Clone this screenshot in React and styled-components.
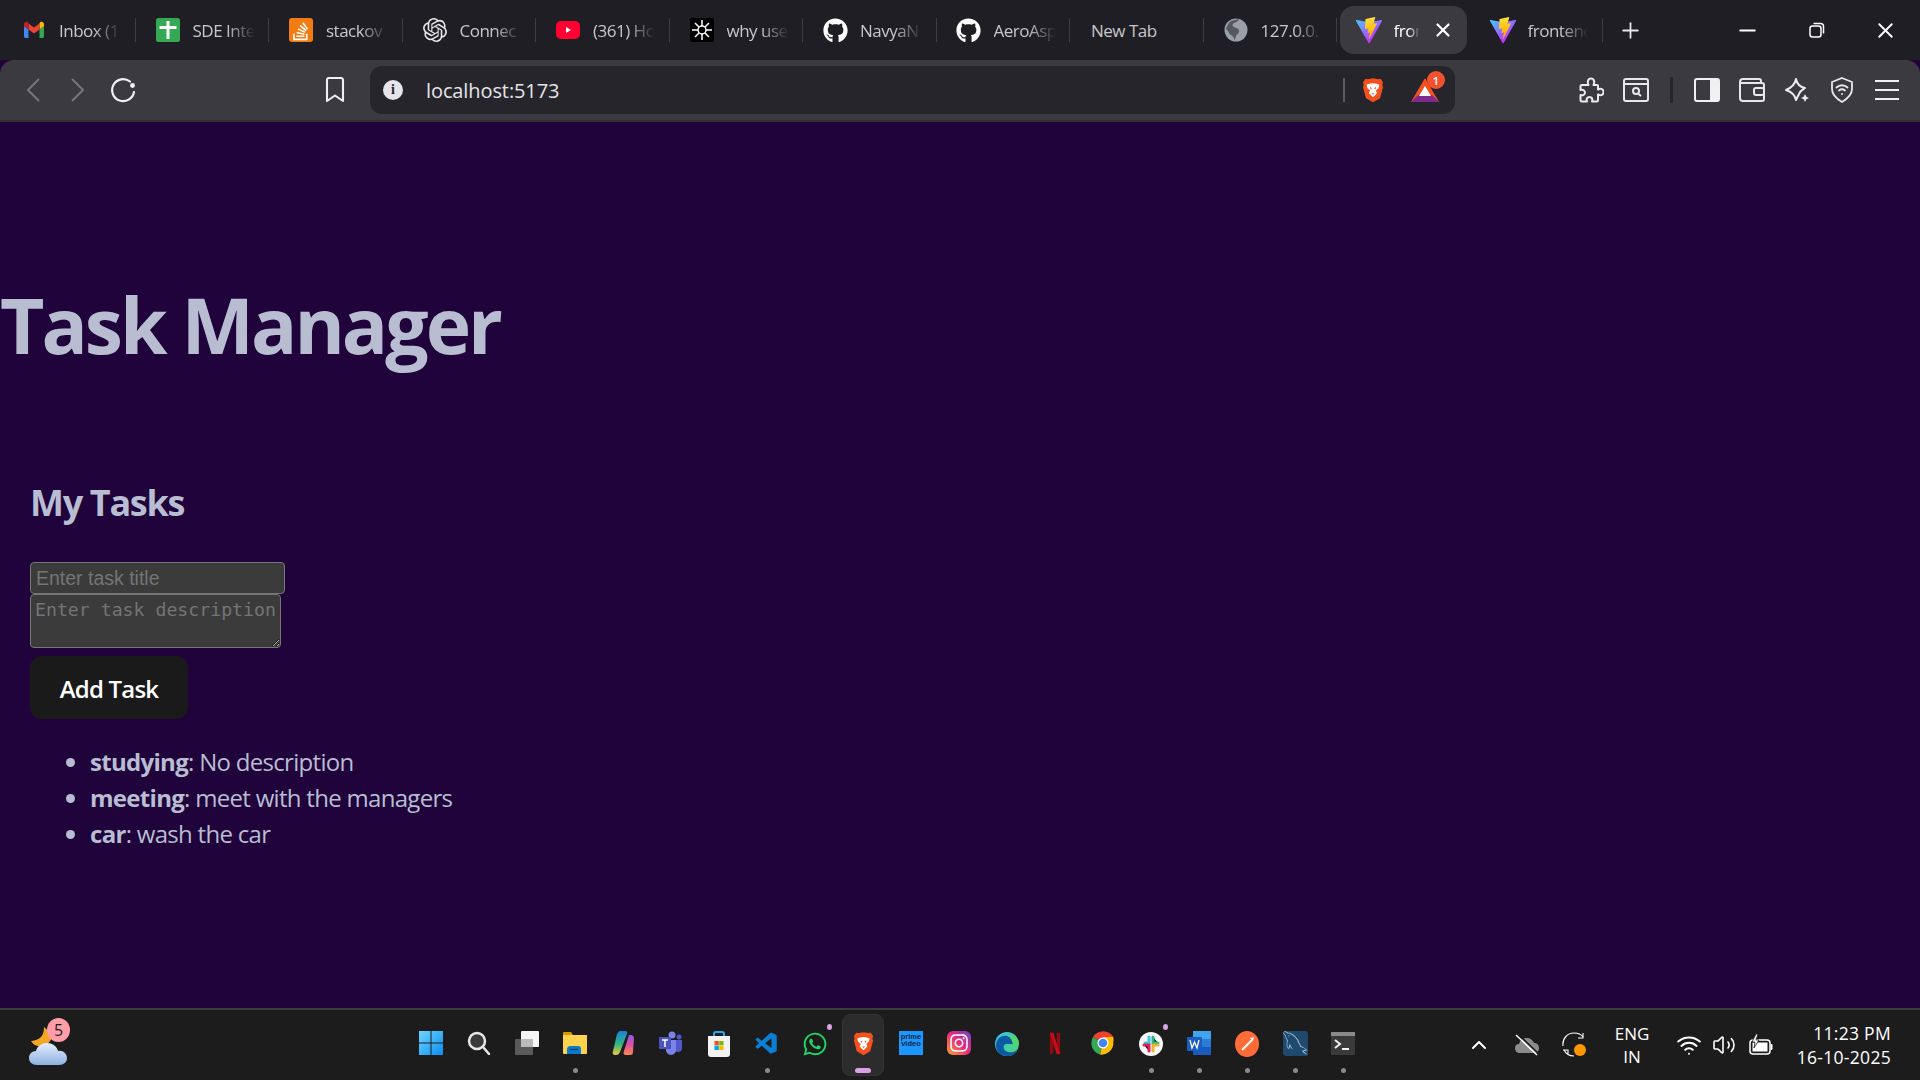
import React from "react";
import styled, { createGlobalStyle } from "styled-components";
import { FaGithub, FaWhatsapp, FaInstagram } from "react-icons/fa";
import { SiOpenai } from "react-icons/si";
import { VscVscode } from "react-icons/vsc";
import { GrMysql } from "react-icons/gr";
import { Wifi, Volume2, X, Plus, Minus, ChevronUp } from "lucide-react";

const Global = createGlobalStyle`
  html, body { margin: 0; padding: 0; height: 100%; background: #20033b; overflow: hidden; }
  #root { height: 100%; }
  * { box-sizing: border-box; }
`;

const UI = `"Open Sans", "Noto Sans", sans-serif`;

const Screen = styled.div`
  width: 1920px; height: 1080px; display: flex; flex-direction: column; font-family: ${UI};
`;

/* tab strip */
const TabStrip = styled.div`
  height: 60px; flex: none; background: #1e1e24; display: flex; align-items: center; padding-left: 2px; color: #fff;
`;
const Tab = styled.div`
  width: ${p => p.$w || 133.5}px; height: 48px; flex: none; display: flex; align-items: center; gap: 13px;
  padding-left: ${p => p.$pad || 20}px; position: relative; margin-left: ${p => p.$ml || 0}px;
  background: ${p => (p.$active ? "#3a3a40" : "transparent")};
  border-radius: 14px;
  &::after {
    content: ""; display: ${p => (p.$sep ? "block" : "none")}; position: absolute; right: 0; top: 12px; height: 24px; width: 1px; background: #3d3d43;
  }
`;
const TabIcon = styled.span`
  width: 24px; height: 24px; flex: none; display: flex; align-items: center; justify-content: center;
  svg { display: block; flex: none; }
`;
const TabTitle = styled.span`
  font-size: 17px; letter-spacing: -0.5px; white-space: nowrap; overflow: hidden; width: ${p => p.$w || 62}px; flex: none;
  color: ${p => (p.$bright ? "#fff" : "#c8c8ca")};
  -webkit-mask-image: ${p => (p.$plain ? "none" : "linear-gradient(to right, #000 55%, transparent 100%)")};
  mask-image: ${p => (p.$plain ? "none" : "linear-gradient(to right, #000 55%, transparent 100%)")};
`;
const TabClose = styled.span`
  position: absolute; left: 92px; top: 13px; width: 22px; height: 22px; display: flex; align-items: center; justify-content: center;
`;
const NewTabBtn = styled.div`
  width: 56px; display: flex; justify-content: center; align-items: center;
`;
const WindowControls = styled.div`
  margin-left: auto; display: flex; align-items: center;
`;
const WinBtn = styled.div`
  width: 69px; height: 48px; display: flex; align-items: center; justify-content: center;
`;

/* toolbar */
const Toolbar = styled.div`
  height: 62px; flex: none; background: #3a3a40; border-radius: 14px 14px 0 0; display: flex; align-items: center;
  padding: 0 0 0 10px; color: #f0f0f2; border-bottom: 2px solid #2e2e33;
`;
const ToolBtn = styled.div`
  width: ${p => p.$w || 45}px; height: 46px; flex: none; margin-left: ${p => p.$ml || 0}px; display: flex; align-items: center; justify-content: center;
  svg { display: block; }
`;
const ToolSep = styled.div`
  width: 3px; height: 26px; background: #25252b; border-radius: 2px;
`;
const UrlBar = styled.div`
  width: 1085px; height: 48px; flex: none; margin-left: 13px; background: #25252b; border-radius: 12px;
  display: flex; align-items: center; padding-left: 13px; position: relative;
`;
const UrlInfo = styled.span`
  width: 20px; height: 20px; border-radius: 50%; background: #e6e6ea; color: #25252b; font: 700 14px "Liberation Serif", serif;
  display: flex; align-items: center; justify-content: center;
`;
const UrlText = styled.span`
  margin-left: 23px; font-size: 20px; letter-spacing: -0.1px; color: #e4e6ea;
`;
const UrlEnd = styled.div`
  margin-left: auto; display: flex; align-items: center; height: 100%;
`;
const UrlSep = styled.div`
  width: 2px; height: 24px; background: #5a5a60;
`;
const UrlIconCell = styled.div`
  width: ${p => p.$w}px; display: flex; justify-content: center; align-items: center; position: relative;
`;
const Badge = styled.span`
  position: absolute; left: 26px; top: -7px; width: 18px; height: 18px; border-radius: 50%; background: #f4512e; color: #fff;
  font-size: 11px; font-weight: 600; display: flex; align-items: center; justify-content: center;
`;

/* page */
const Page = styled.main`
  flex: 1; min-height: 0; background: #20033b; color: #b8bdd1; padding-top: 161px;
`;
const Title = styled.h1`
  margin: 0; font-size: 76.8px; line-height: 84.5px; font-weight: 700; letter-spacing: -3px; white-space: nowrap;
`;
const Section = styled.section`
  padding: 0 30px; margin-top: 108px;
`;
const Subtitle = styled.h2`
  margin: 0 0 32px; font-size: 36px; line-height: 54px; font-weight: 700; letter-spacing: -1.3px;
`;
const Form = styled.form`
  display: flex; flex-direction: column; align-items: flex-start;
`;
const TitleInput = styled.input`
  width: 255px; height: 32px; background: #3b3b3b; border: 1.5px solid #767676; border-radius: 4px; padding: 1px 5px 0; margin: 0;
  font: 19.5px "Liberation Sans", Arial, sans-serif; color: #fff; outline: none;
  &::placeholder { color: #757575; opacity: 1; }
`;
const DescInput = styled.textarea`
  display: block; width: 251px; height: 54px; background: #3b3b3b; border: 1px solid #767676; border-radius: 4px; padding: 4px 4px 2px; margin: 0;
  font: 18.2px/21px "DejaVu Sans Mono", monospace; color: #fff; outline: none; letter-spacing: 0; color-scheme: dark;
  &::placeholder { color: #757575; opacity: 1; }
`;
const AddButton = styled.button`
  margin-top: 8px; width: 158px; height: 63px; background: #1a1a1a; border: 0; border-radius: 12px; color: #fff;
  font-family: ${UI}; font-size: 24px; font-weight: 600; letter-spacing: -0.8px; padding: 2px 0 0;
`;
const TaskList = styled.ul`
  margin: 25px 0 0; padding: 0 0 0 60px; font-size: 24px; line-height: 36px; letter-spacing: -0.7px;
  li::marker { color: #b8bdd1; }
`;
const Task = styled.li`
  strong { font-weight: 700; }
`;

/* taskbar */
const Taskbar = styled.footer`
  height: 72px; flex: none; background: #1c1c1c; border-top: 2px solid #3b3b3b; display: grid; grid-template-columns: 407px 961px 1fr; color: #fff;
`;
const Weather = styled.div`
  padding-left: 28px; display: flex; align-items: center;
`;
const WeatherIcon = styled.div`
  position: relative; width: 40px; height: 44px;
`;
const WeatherBadge = styled.span`
  position: absolute; left: 19px; top: -5px; width: 23px; height: 24px; border-radius: 50%; background: #ff9da8; color: #1c1c1c;
  font-size: 16px; display: flex; align-items: center; justify-content: center;
`;
const Apps = styled.div`
  display: flex; align-items: stretch;
`;
const AppCell = styled.div`
  width: 48px; position: relative; display: flex; justify-content: center; padding-top: 21px;
  svg { display: block; }
  &::before {
    content: ""; display: ${p => (p.$active ? "block" : "none")}; position: absolute; left: 3px; right: 3px; top: 4px; height: 60px; background: #2c2c2c; border: 1px solid #333; border-radius: 8px;
  }
  > * { position: relative; }
`;
const RunDot = styled.span`
  position: absolute !important; left: 21.5px; top: 58px; width: 5px; height: 5px; border-radius: 50%; background: #8a8a8a;
`;
const ActivePill = styled.span`
  position: absolute !important; left: 16px; top: 58px; width: 16px; height: 5px; border-radius: 3px; background: #d9a2e3;
`;
const NotifyDot = styled.span`
  position: absolute !important; left: 36px; top: 14px; width: 5px; height: 6px; border-radius: 50%; background: #d9a2e3;
`;
const Tray = styled.div`
  display: flex; align-items: center; padding-left: 87px;
`;
const TrayCell = styled.div`
  width: ${p => p.$w}px; display: flex; justify-content: center; align-items: center;
  svg { display: block; }
`;
const Lang = styled.div`
  width: 70px; font-size: 17px; line-height: 23px; text-align: center; font-family: "Open Sans", sans-serif; letter-spacing: -0.1px;
`;
const Clock = styled.div`
  margin-left: auto; padding-right: 29px; text-align: right; font-size: 17.5px; line-height: 24px; letter-spacing: 0.3px;
`;
const PrimeBox = styled.div`
  width: 24px; height: 24px; background: #1a98ff; color: #10233d; display: flex; flex-direction: column; align-items: center;
  font: 700 7.5px/7px "Liberation Sans", sans-serif; padding-top: 2px; text-align: center;
`;
const InstaBox = styled.div`
  width: 24px; height: 24px; border-radius: 6px; background: linear-gradient(45deg, #f9a825 0%, #ee2a7b 50%, #6a3fc9 100%);
  display: flex; align-items: center; justify-content: center; color: #fff;
`;

const Gmail = () => (
  <svg width="24" height="24" viewBox="0 0 24 24">
    <path d="M2 8v10.500C2 19.300 2.700 20 3.500 20h3v-8.500z" fill="#4285f4" />
    <path d="M22 8v10.500c0 .8-.7 1.500-1.500 1.500h-3v-8.500z" fill="#34a853" />
    <path d="M17.500 5.500v6L22 8V6.200c0-2-2.300-3.200-3.900-2z" fill="#fbbc04" />
    <path d="M6.500 11.500v-6L12 9.600l5.500-4.100v6L12 15.600z" fill="#ea4335" />
    <path d="M2 6.200V8l4.500 3.500v-6L5.900 4.200C4.300 3 2 4.200 2 6.200z" fill="#c5221f" />
  </svg>
);
const Sheets = () => (
  <svg width="24" height="24" viewBox="0 0 24 24">
    <rect width="24" height="24" rx="2.500" fill="#34a853" />
    <path d="M3.500 8h7V3h3v5h7v3h-7v10h-3V11h-7z" fill="#fff" />
  </svg>
);
const SO = () => (
  <svg width="24" height="24" viewBox="0 0 24 24">
    <rect width="24" height="24" rx="3" fill="#f47b0f" />
    <g transform="translate(4 3) scale(0.04)">
      <path fill="#fff" d="M290.700 311L95 269.700 86.800 309l195.700 41zm51-87L188.200 95.700l-25.500 30.800 153.500 128.300zm-31.200 39.700L129.200 179l-16.700 36.500L293.700 300zM262 32l-32 24 119.300 160.300 32-24zm20.500 328h-200v39.700h200zm39.700 80H42.700V320h-40v160h359.500V320h-40z" />
    </g>
  </svg>
);
const YouTube = () => (
  <svg width="24" height="24" viewBox="0 0 24 24">
    <rect y="3" width="24" height="18" rx="5" fill="#ff0033" />
    <path d="M10 9l5 3-5 3z" fill="#fff" />
  </svg>
);
const WhyIcon = () => (
  <svg width="24" height="24" viewBox="0 0 24 24">
    <rect width="24" height="24" rx="2" fill="#000" />
    <g stroke="#fff" strokeWidth="1.500" fill="none">
      <path d="M12 2v20M5 5l14 14M19 5L5 19M2 12h20" />
      <circle cx="12" cy="12" r="4" fill="#000" />
    </g>
  </svg>
);
const Globe = () => (
  <svg width="24" height="24" viewBox="0 0 24 24">
    <circle cx="12" cy="12" r="11.500" fill="#9aa0a6" />
    <path d="M15 1c-1 3-3 3-5 4S8 8 10 9s5 1 5 4-2 3-3 5-1 4-1 5c-1-3-2-5-4-6s-2-4-5-6c0 0 2-6 5-8" fill="#1e1e24" opacity=".55" />
  </svg>
);
const Vite = ({ id }) => (
  <svg width="28" height="27" viewBox="0 0 410 404">
    <defs>
      <linearGradient id={id + "a"} x1="6" y1="33" x2="235" y2="344" gradientUnits="userSpaceOnUse">
        <stop stopColor="#41D1FF" /><stop offset="1" stopColor="#BD34FE" />
      </linearGradient>
      <linearGradient id={id + "b"} x1="194" y1="8" x2="236" y2="292" gradientUnits="userSpaceOnUse">
        <stop stopColor="#FFEA83" /><stop offset="0.08" stopColor="#FFDD35" /><stop offset="1" stopColor="#FFA800" />
      </linearGradient>
    </defs>
    <path d="M399.641 59.5246L215.643 388.545C211.844 395.338 202.084 395.378 198.228 388.618L10.5817 59.5563C6.38087 52.1896 12.6802 43.2665 21.0281 44.7586L205.223 77.6824C206.398 77.8924 207.601 77.8904 208.776 77.6763L389.119 44.8058C397.439 43.2894 403.768 52.1434 399.641 59.5246Z" fill={`url(#${id}a)`} />
    <path d="M292.965 1.5744L156.801 28.2552C154.563 28.6937 152.906 30.5903 152.771 32.8664L144.395 174.33C144.198 177.662 147.258 180.248 150.51 179.498L188.42 170.749C191.967 169.931 195.172 173.055 194.443 176.622L183.18 231.775C182.422 235.487 185.907 238.661 189.532 237.56L212.947 230.446C216.577 229.344 220.065 232.527 219.297 236.242L201.398 322.875C200.278 328.294 207.486 331.249 210.492 326.603L212.5 323.5L323.454 102.072C325.312 98.3645 322.108 94.137 318.036 94.9228L279.014 102.454C275.347 103.161 272.227 99.746 273.262 96.1583L298.731 7.86689C299.767 4.27314 296.636 0.855181 292.965 1.5744Z" fill={`url(#${id}b)`} />
  </svg>
);
const Brave = ({ s = 24 }) => (
  <svg width={s} height={s * 1.1} viewBox="0 0 24 26">
    <path d="M12 1l5 1 2.500-.5L22 5l-.7 2.500.7 2.500-3 11-7 4-7-4-3-11 .7-2.500L2 5l2.500-3.500L7 2z" fill="#f4511e" />
    <path d="M12 6l3.500.5 3 1-1 3.500L15 13l1 3-2.500 2.500L12 20l-1.500-1.500L8 16l1-3-2.500-2-1-3.500 3-1z" fill="#fff" />
    <path d="M9 9.500l2 1.500-1.500 1zM15 9.500l-2 1.500 1.500 1zM10.500 16h3L12 17.500z" fill="#f4511e" />
  </svg>
);
const BatTriangle = () => (
  <svg width="28" height="24" viewBox="0 0 28 24">
    <path d="M14 0l14 24H0z" fill="#f4511e" />
    <path d="M0 24l7-7h14l7 7z" fill="#7d2a8c" />
    <path d="M14 8l6 10H8z" fill="#fff" />
  </svg>
);
const Chevron = ({ dir }) => (
  <svg width="14" height="24" viewBox="0 0 14 24" fill="none" stroke="#77777c" strokeWidth="1.800" strokeLinecap="round" strokeLinejoin="round">
    <path d={dir === "left" ? "M12.500 1.500L2 12l10.500 10.500" : "M1.500 1.500L12 12 1.500 22.500"} />
  </svg>
);
const Reload = () => (
  <svg width="26" height="26" viewBox="0 0 26 26" fill="none" stroke="#f2f2f4" strokeWidth="2.200" strokeLinecap="round">
    <path d="M24 15a11 11 0 1 1-4-10.500" />
    <circle cx="22.500" cy="8.500" r="2.400" fill="#f2f2f4" stroke="none" />
  </svg>
);
const BookmarkIcon = () => (
  <svg width="20" height="26" viewBox="0 0 20 26" fill="none" stroke="#f0f0f2" strokeWidth="2.100" strokeLinejoin="round">
    <path d="M2 3a2 2 0 0 1 2-2h12a2 2 0 0 1 2 2v21l-8-5.500L2 24z" />
  </svg>
);
const PuzzleIcon = () => (
  <svg width="26" height="26" viewBox="0 0 26 26" fill="none" stroke="#ececee" strokeWidth="2" strokeLinejoin="round">
    <path d="M7 8h3.500C9 5 10 1.500 13 1.500S17 5 15.500 8H19a1 1 0 0 1 1 1v3.500c3-1.500 5.500-.5 5.500 2.500S23 19 20 17.500V23a1.500 1.500 0 0 1-1.500 1.500H14c1-3-.5-4.500-2.500-4.500S8 21.500 9 24.500H4A1.500 1.500 0 0 1 2.500 23v-5c2.500 1 4.500-.5 4.500-2.500S4.500 12 2.500 13V9.500A1.500 1.500 0 0 1 4 8z" />
  </svg>
);
const Screenshot = () => (
  <svg width="26" height="24" viewBox="0 0 26 24" fill="none" stroke="#e8e8ea" strokeWidth="2">
    <rect x="1" y="1" width="24" height="22" rx="2" />
    <path d="M1 6h24" />
    <circle cx="13" cy="13" r="3" />
    <path d="M15 15.500l3 2.500" />
  </svg>
);
const Sidebar = () => (
  <svg width="26" height="24" viewBox="0 0 26 24">
    <rect x="1" y="1" width="24" height="22" rx="2" fill="none" stroke="#f0f0f2" strokeWidth="2" />
    <path d="M16 1h7a2 2 0 0 1 2 2v18a2 2 0 0 1-2 2h-7z" fill="#f0f0f2" />
  </svg>
);
const Wallet = () => (
  <svg width="26" height="24" viewBox="0 0 26 24" fill="none" stroke="#e8e8ea" strokeWidth="2">
    <path d="M22 5V3a2 2 0 0 0-2-2H4a3 3 0 0 0-3 3v16a3 3 0 0 0 3 3h19a2 2 0 0 0 2-2V7a2 2 0 0 0-2-2H1" />
    <rect x="15" y="10" width="10" height="7" rx="2" />
  </svg>
);
const Leo = () => (
  <svg width="26" height="26" viewBox="0 0 26 26" fill="none" stroke="#ececee" strokeWidth="2" strokeLinejoin="round">
    <path d="M12 2c1 5 4 8 9 9-3 2-5 3-6 6l-3 6c-1-5-4-8-10-10 5-2 9-6 10-11z" />
    <path d="M21 17l1.300 2.700L25 21l-2.700 1.300L21 25l-1.300-2.700L17 21l2.700-1.300z" fill="#ececee" stroke="none" />
  </svg>
);
const Vpn = () => (
  <svg width="24" height="26" viewBox="0 0 24 26" fill="none" stroke="#e8e8ea" strokeWidth="1.800" strokeLinecap="round">
    <path d="M12 1l10 4v7c0 6-5 10-10 13C7 22 2 18 2 12V5z" />
    <path d="M6.500 10.500c3-3 8-3 11 0M9 13.500c2-1.600 4-1.600 6 0" />
    <circle cx="12" cy="17" r="1" fill="#e8e8ea" stroke="none" />
  </svg>
);
const Menu = () => (
  <svg width="26" height="22" viewBox="0 0 26 22" stroke="#f0f0f2" strokeWidth="2">
    <path d="M1 2h24M1 11h24M1 20h24" />
  </svg>
);
const Restore = () => (
  <svg width="16" height="16" viewBox="0 0 16 16" fill="none" stroke="#fff" strokeWidth="1.500">
    <rect x="1" y="4" width="11" height="11" rx="2.500" />
    <path d="M4.500 1.500h7a3 3 0 0 1 3 3v7" />
  </svg>
);
const Start = () => (
  <svg width="24" height="24" viewBox="0 0 24 24">
    <defs><linearGradient id="st" x1="0" y1="0" x2="1" y2="1"><stop stopColor="#6fd4ff" /><stop offset="1" stopColor="#0a8ff0" /></linearGradient></defs>
    <path d="M0 0h11.500v11.500H0zM12.500 0H24v11.500H12.500zM0 12.500h11.500V24H0zM12.500 12.500H24V24H12.500z" fill="url(#st)" />
  </svg>
);
const Search = () => (
  <svg width="24" height="24" viewBox="0 0 24 24">
    <circle cx="10" cy="10" r="8" fill="#3a3a3a" stroke="#e8e8e8" strokeWidth="2.500" />
    <path d="M16 16l6 7" stroke="#e8e8e8" strokeWidth="2.500" strokeLinecap="round" />
  </svg>
);
const TaskView = () => (
  <svg width="24" height="24" viewBox="0 0 24 24">
    <rect x="6" y="0" width="18" height="16" rx="1" fill="#f7f7f7" />
    <rect x="0" y="8" width="18" height="16" rx="1" fill="#606060" opacity=".92" />
    <rect x="6" y="8" width="12" height="8" fill="#bbb" />
  </svg>
);
const Explorer = () => (
  <svg width="24" height="24" viewBox="0 0 24 24">
    <path d="M0 2a1 1 0 0 1 1-1h7l2 3h13a1 1 0 0 1 1 1v3H0z" fill="#d99a00" />
    <path d="M0 4h24v18a1 1 0 0 1-1 1H1a1 1 0 0 1-1-1z" fill="#fdd34d" />
    <path d="M4 23v-5.500A3 3 0 0 1 7 15h8a3 3 0 0 1 3 3v5z" fill="#0a7cd0" />
    <path d="M7 18.500h8" stroke="#05355e" strokeWidth="1.200" />
  </svg>
);
const Copilot = () => (
  <svg width="22" height="24" viewBox="0 0 22 24">
    <defs>
      <linearGradient id="c1" x1="0" y1="0" x2="0" y2="1"><stop stopColor="#1a7fd8" /><stop offset=".55" stopColor="#2fb67f" /><stop offset="1" stopColor="#f5c73d" /></linearGradient>
      <linearGradient id="c2" x1="0" y1="0" x2="0" y2="1"><stop stopColor="#8a5cf0" /><stop offset=".5" stopColor="#e0509e" /><stop offset="1" stopColor="#fb8a4c" /></linearGradient>
    </defs>
    <path d="M8 0h5c2 0 3 1 2 3L8 21c-1 2-2 3-4 3H3c-2 0-3-2-2-4L5 3c1-2 2-3 3-3z" fill="url(#c1)" />
    <path d="M14 24h4c2 0 3-1 3-3l1-14c0-2-2-3-3-3l-2 0-5 16c-1 3 0 4 2 4z" fill="url(#c2)" />
  </svg>
);
const Teams = () => (
  <svg width="24" height="24" viewBox="0 0 24 24">
    <circle cx="13" cy="4" r="3.500" fill="#7b83eb" />
    <circle cx="20" cy="6" r="2.500" fill="#5059c9" />
    <path d="M15 9h8v8a4 4 0 0 1-8 0z" fill="#5059c9" />
    <path d="M6 9h11v10a5 5 0 0 1-10 0z" fill="#7b83eb" />
    <rect x="0" y="6" width="12" height="12" rx="1" fill="#4b53bc" />
    <path d="M3 9h6M6 9v7" stroke="#fff" strokeWidth="1.500" />
  </svg>
);
const Store = () => (
  <svg width="24" height="26" viewBox="0 0 24 26">
    <path d="M7 6V3a2 2 0 0 1 2-2h6a2 2 0 0 1 2 2v3" fill="none" stroke="#28a8ea" strokeWidth="2" />
    <path d="M1 5h22v18a3 3 0 0 1-3 3H4a3 3 0 0 1-3-3z" fill="#f3f3f3" />
    <rect x="7.500" y="10" width="4.300" height="4.300" fill="#f25022" />
    <rect x="12.200" y="10" width="4.300" height="4.300" fill="#7fba00" />
    <rect x="7.500" y="14.700" width="4.300" height="4.300" fill="#00a4ef" />
    <rect x="12.200" y="14.700" width="4.300" height="4.300" fill="#ffb900" />
  </svg>
);
const Edge = () => (
  <svg width="24" height="26" viewBox="0 0 24 26">
    <defs>
      <linearGradient id="e1" x1="0" y1="0" x2="1" y2="1"><stop stopColor="#35c1f1" /><stop offset="1" stopColor="#52d86a" /></linearGradient>
    </defs>
    <circle cx="12" cy="13" r="12" fill="url(#e1)" />
    <path d="M1 15C1 6 8 4 12 5c5 1 7 5 6 8l-6 0c-3 0-4 2-3 5 1 2 4 4 9 3 3-1 4-2 5-3-2 6-7 7-11 7C5 25 1 20 1 15z" fill="#0c59a4" />
    <path d="M24 13c0 2-3 2-6 0-1-3-2-7-6-8 6-1 12 2 12 8z" fill="#52d86a" />
  </svg>
);
const Netflix = () => (
  <svg width="12" height="24" viewBox="0 0 14 24">
    <path d="M1 0h4v24l-4 1zM9 0h4v25l-4-1z" fill="#8f0a12" />
    <path d="M1 0h4l8 25h-4z" fill="#c50f18" />
  </svg>
);
const Chrome = () => (
  <svg width="24" height="24" viewBox="0 0 24 24">
    <path d="M12 12L2 6a12 12 0 0 1 20.400 0z" fill="#ea4335" />
    <path d="M12 12L2 6a12 12 0 0 0 7 17.600z" fill="#34a853" />
    <path d="M12 12h10.400a12 12 0 0 1-13.400 11.600z" fill="#fbbc04" />
    <path d="M12 6h10.400a12 12 0 0 1-5.200 12z" fill="#fbbc04" />
    <circle cx="12" cy="12" r="5.500" fill="#fff" />
    <circle cx="12" cy="12" r="4.300" fill="#4285f4" />
  </svg>
);
const Slack = () => (
  <svg width="24" height="26" viewBox="0 0 24 26">
    <circle cx="12" cy="13" r="12" fill="#f8f8f8" />
    <g strokeWidth="3" strokeLinecap="round">
      <path d="M10 6v6M10 12H6" stroke="#36c5f0" />
      <path d="M14 6v6h5" stroke="#2eb67d" />
      <path d="M14 20v-6M14 14h5" stroke="#ecb22e" />
      <path d="M10 20v-6H5" stroke="#e01e5a" />
    </g>
  </svg>
);
const Word = () => (
  <svg width="24" height="24" viewBox="0 0 24 24">
    <rect x="6" y="0" width="18" height="8" fill="#41a5ee" />
    <rect x="6" y="8" width="18" height="8" fill="#2b7cd3" />
    <rect x="6" y="16" width="18" height="8" fill="#185abd" />
    <rect x="0" y="6" width="15" height="14" rx="1" fill="#1a5dc0" />
    <path d="M3 9l2 8 2.500-6 2.500 6 2-8" stroke="#fff" strokeWidth="1.300" fill="none" />
  </svg>
);
const Postman = () => (
  <svg width="24" height="26" viewBox="0 0 24 26">
    <ellipse cx="12" cy="13" rx="12" ry="13" fill="#ff6c37" />
    <path d="M7 19L17 9" stroke="#fff" strokeWidth="2" />
    <path d="M15 7l3 3 1-4z" fill="#fff" />
  </svg>
);
const Terminal = () => (
  <svg width="24" height="24" viewBox="0 0 24 24">
    <rect y="1" width="24" height="23" rx="1.500" fill="#3a3a3a" />
    <rect y="1" width="24" height="4" fill="#8a8a8a" />
    <path d="M4 9l5 4-5 4" fill="none" stroke="#f0f0f0" strokeWidth="2" />
    <path d="M11 18h7" stroke="#f0f0f0" strokeWidth="2" />
  </svg>
);
const Cloud = () => (
  <svg width="40" height="44" viewBox="0 0 40 44">
    <defs><linearGradient id="wc" x1="0" y1="0" x2="0" y2="1"><stop stopColor="#e4eeff" /><stop offset="1" stopColor="#8eb1e0" /></linearGradient></defs>
    <path d="M16 4c0 8-3 13-13 14 3 5 8 6 15 5l8-10z" fill="#f5a623" />
    <path d="M9 42c-5 0-8-3-8-7s3-7 7-7c1-5 6-8 11-8s10 3 11 8c5-1 9 3 9 7s-3 7-8 7z" fill="url(#wc)" />
  </svg>
);
const OneDriveOff = () => (
  <svg width="26" height="22" viewBox="0 0 26 22">
    <path d="M6 19c-3 0-5-2-5-5 0-2 1-4 4-4 1-4 4-6 8-6 3 0 6 2 7 5 3 0 5 2 5 5s-2 5-5 5z" fill="#8c8c8c" />
    <path d="M2 1l21 20" stroke="#fff" strokeWidth="1.500" />
    <path d="M4 0l21 20" stroke="#1c1c1c" strokeWidth="1.500" />
  </svg>
);
const Sync = () => (
  <svg width="24" height="26" viewBox="0 0 24 26" fill="none">
    <path d="M1 14C0 6 6 1 12 1c4 0 7 1 9 4M21 1v5h-5" stroke="#fff" strokeWidth="1.100" />
    <path d="M1 18h5v4M2 18c2 4 5 6 10 6" stroke="#fff" strokeWidth="1.100" />
    <circle cx="18" cy="18" r="6" fill="#ff9800" />
  </svg>
);
const Battery = () => (
  <svg width="24" height="22" viewBox="0 0 24 22" fill="none">
    <rect x="1" y="6" width="20" height="14" rx="3" stroke="#fff" strokeWidth="1.500" />
    <rect x="3.500" y="8.500" width="15" height="9" fill="#fff" />
    <rect x="21.500" y="10" width="2" height="6" rx="1" fill="#fff" />
    <path d="M7 0L3 8h3l-1 6 5-8H7l2-6z" fill="#fff" stroke="#1c1c1c" strokeWidth=".8" />
  </svg>
);

const tabs = [
  { icon: <Gmail />, title: "Inbox (1" },
  { icon: <Sheets />, title: "SDE Inte" },
  { icon: <SO />, title: "stackov" },
  { icon: <SiOpenai size={24} color="#e8e8e8" />, title: "Connec" },
  { icon: <YouTube />, title: "(361) Ho" },
  { icon: <WhyIcon />, title: "why use" },
  { icon: <FaGithub size={25} color="#fff" />, title: "NavyaN" },
  { icon: <FaGithub size={25} color="#fff" />, title: "AeroAsp" },
  { title: "New Tab", plain: true },
  { icon: <Globe />, title: "127.0.0." },
];

const apps = [
  { el: <Start /> }, { el: <Search /> }, { el: <TaskView /> }, { el: <Explorer />, dot: true }, { el: <Copilot /> }, { el: <Teams /> },
  { el: <Store /> }, { el: <VscVscode size={26} color="#0a7fd4" />, dot: true }, { el: <FaWhatsapp size={26} color="#25d366" />, notify: true },
  { el: <Brave s={23} />, active: true },
  { el: <PrimeBox>prime<br />video</PrimeBox> },
  { el: <InstaBox><FaInstagram size={20} /></InstaBox> },
  { el: <Edge /> }, { el: <Netflix /> }, { el: <Chrome /> }, { el: <Slack />, dot: true, notify: true },
  { el: <Word />, dot: true }, { el: <Postman />, dot: true },
  { el: <GrMysql size={25} color="#9db8d2" style={{ background: "#1f4a6e", borderRadius: 3 }} />, dot: true },
  { el: <Terminal />, dot: true },
];

export default function App() {
  return (
    <Screen>
      <Global />
      <TabStrip>
        {tabs.map((t, i) => (
          <Tab key={i} $sep $pad={t.plain ? 21 : 20}>
            {t.icon && <TabIcon>{t.icon}</TabIcon>}
            <TabTitle $w={t.plain ? 90 : 62} $plain={t.plain}>{t.title}</TabTitle>
          </Tab>
        ))}
        <Tab $active $w={127} $ml={2.5} $pad={17}>
          <TabIcon><Vite id="v1" /></TabIcon>
          <TabTitle $w={26} $bright>front</TabTitle>
          <TabClose><X size={22} strokeWidth={2.4} color="#fff" /></TabClose>
        </Tab>
        <Tab $sep $w={132} $ml={4} $pad={20}>
          <TabIcon><Vite id="v2" /></TabIcon>
          <TabTitle $w={60}>frontend</TabTitle>
        </Tab>
        <NewTabBtn><Plus size={25} color="#e8e8ea" strokeWidth={1.7} /></NewTabBtn>
        <WindowControls>
          <WinBtn><Minus size={25} color="#fff" strokeWidth={1.8} /></WinBtn>
          <WinBtn><Restore /></WinBtn>
          <WinBtn><X size={25} color="#fff" strokeWidth={1.8} /></WinBtn>
        </WindowControls>
      </TabStrip>

      <Toolbar>
        <ToolBtn><Chevron dir="left" /></ToolBtn>
        <ToolBtn><Chevron dir="right" /></ToolBtn>
        <ToolBtn><Reload /></ToolBtn>
        <ToolBtn $ml={167}><BookmarkIcon /></ToolBtn>
        <UrlBar>
          <UrlInfo>i</UrlInfo>
          <UrlText>localhost:5173</UrlText>
          <UrlEnd>
            <UrlSep />
            <UrlIconCell $w={56}><Brave s={24} /></UrlIconCell>
            <UrlIconCell $w={48}><BatTriangle /><Badge>1</Badge></UrlIconCell>
            <UrlIconCell $w={6} />
          </UrlEnd>
        </UrlBar>
        <ToolBtn $ml={113}><PuzzleIcon /></ToolBtn>
        <ToolBtn><Screenshot /></ToolBtn>
        <ToolBtn $w={26}><ToolSep /></ToolBtn>
        <ToolBtn><Sidebar /></ToolBtn>
        <ToolBtn><Wallet /></ToolBtn>
        <ToolBtn><Leo /></ToolBtn>
        <ToolBtn><Vpn /></ToolBtn>
        <ToolBtn><Menu /></ToolBtn>
      </Toolbar>

      <Page>
        <Title>Task Manager</Title>
        <Section>
          <Subtitle>My Tasks</Subtitle>
          <Form onSubmit={e => e.preventDefault()}>
            <TitleInput placeholder="Enter task title" />
            <DescInput placeholder="Enter task description" />
            <AddButton type="submit">Add Task</AddButton>
          </Form>
          <TaskList>
            <Task><strong>studying</strong>: No description</Task>
            <Task><strong>meeting</strong>: meet with the managers</Task>
            <Task><strong>car</strong>: wash the car</Task>
          </TaskList>
        </Section>
      </Page>

      <Taskbar>
        <Weather>
          <WeatherIcon><Cloud /><WeatherBadge>5</WeatherBadge></WeatherIcon>
        </Weather>
        <Apps>
          {apps.map((a, i) => (
            <AppCell key={i} $active={a.active}>
              {a.el}
              {a.dot && <RunDot />}
              {a.active && <ActivePill />}
              {a.notify && <NotifyDot />}
            </AppCell>
          ))}
        </Apps>
        <Tray>
          <TrayCell $w={48}><ChevronUp size={24} color="#fff" strokeWidth={2} /></TrayCell>
          <TrayCell $w={48}><OneDriveOff /></TrayCell>
          <TrayCell $w={46}><Sync /></TrayCell>
          <Lang>ENG<br />IN</Lang>
          <TrayCell $w={44}><Wifi size={26} color="#fff" strokeWidth={1.8} /></TrayCell>
          <TrayCell $w={26}><Volume2 size={24} color="#fff" strokeWidth={1.6} /></TrayCell>
          <TrayCell $w={48}><Battery /></TrayCell>
          <Clock>11:23 PM<br />16-10-2025</Clock>
        </Tray>
      </Taskbar>
    </Screen>
  );
}
